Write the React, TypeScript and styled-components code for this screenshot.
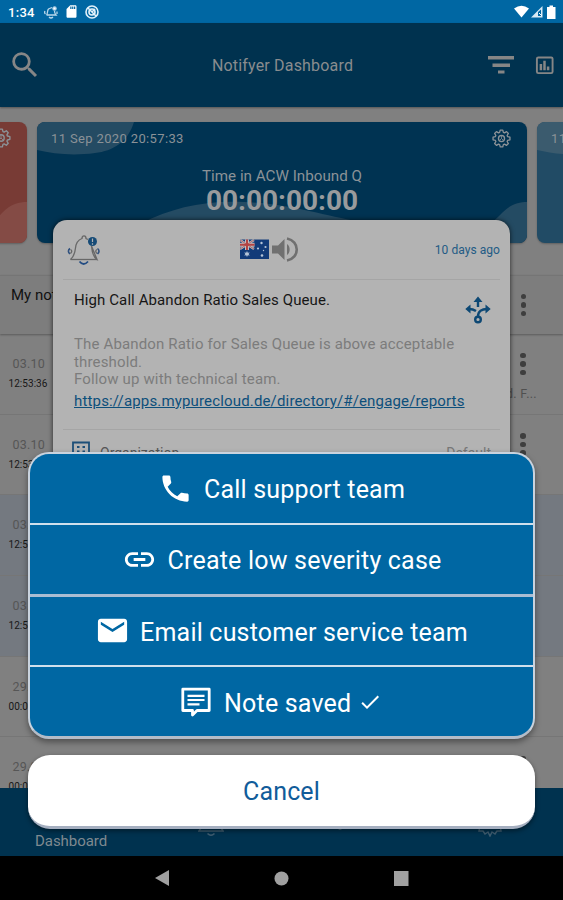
import React from "react";
import styled, { createGlobalStyle } from "styled-components";
import { MdSearch, MdPhone, MdLink, MdEmail, MdCheck, MdVolumeUp, MdSdCard } from "react-icons/md";

const GlobalStyle = createGlobalStyle`
  * { box-sizing: border-box; }
  body { margin: 0; background: #000; font-family: Roboto, "Liberation Sans", sans-serif; }
  svg { display: block; flex: none; }
`;

const Screen = styled.div`
  position: relative;
  display: flex;
  flex-direction: column;
  width: 563px;
  height: 900px;
  overflow: hidden;
  background: #808080;
`;

const StatusBar = styled.div`
  display: flex;
  align-items: center;
  justify-content: space-between;
  height: 23px;
  padding: 0 6px 0 8px;
  background: #0067a3;
  color: #fff;
`;

const StatusGroup = styled.div<{ $gap: number }>`
  display: flex;
  align-items: center;
  gap: ${(p) => p.$gap}px;
`;

const Clock = styled.span`
  width: 28px;
  margin: 2px 2px 0 0;
  font-size: 13px;
  font-weight: 500;
  letter-spacing: 0.3px;
  white-space: nowrap;
`;

const Header = styled.header`
  display: grid;
  grid-template-columns: 90px 1fr 90px;
  align-items: center;
  height: 84px;
  padding: 0 9px 0 8px;
  background: #00324f;
  color: #868686;
  box-shadow: 0 1px 2px rgba(0, 0, 0, 0.35);
  z-index: 1;
`;

const Title = styled.h1`
  margin: 1px 0 0 3px;
  font-size: 16px;
  font-weight: 400;
  letter-spacing: 0.18px;
  text-align: center;
  color: #898c8e;
`;

const HeaderActions = styled.div`
  display: flex;
  align-items: center;
  justify-content: flex-end;
  gap: 20px;
`;

const Carousel = styled.section`
  height: 168px;
  padding-top: 15px;
  overflow: hidden;
  background: #808080;
`;

const Track = styled.div`
  display: flex;
  gap: 10px;
  width: 1490px;
  margin-left: -463px;
`;

const Card = styled.article<{ $bg: string }>`
  position: relative;
  flex: none;
  width: 490px;
  height: 121px;
  overflow: hidden;
  border-radius: 8px;
  background: ${(p) => p.$bg};
  color: #8b9297;
  box-shadow: 0 1px 2px rgba(0, 0, 0, 0.25);
`;

const Waves = styled.svg`
  position: absolute;
  inset: 0;
`;

const CardTop = styled.div`
  position: relative;
  display: flex;
  align-items: center;
  justify-content: space-between;
  height: 32px;
  padding: 0 16px 0 14px;
  font-size: 13px;
  letter-spacing: 0.36px;
`;

const CardBody = styled.div`
  position: relative;
  padding-top: 13px;
  text-align: center;
`;

const CardLabel = styled.div`
  font-size: 15.2px;
  line-height: 18px;
`;

const CardTime = styled.div`
  font-size: 28px;
  font-weight: 700;
  line-height: 31px;
  color: #999b9d;
`;

const ListHeader = styled.div`
  display: flex;
  align-items: center;
  justify-content: space-between;
  height: 59px;
  padding: 0 36.5px 0 11px;
  border-top: 1px solid #757575;
  background: #7d7d7d;
  box-shadow: 0 1px 2px rgba(0, 0, 0, 0.3);
  font-size: 15px;
  color: #111;
  z-index: 1;
`;

const ListTitle = styled.span`
  margin-top: -20px;
`;

const List = styled.div`
  height: 454px;
  overflow: hidden;
`;

const Row = styled.div<{ $tinted?: boolean }>`
  display: flex;
  justify-content: space-between;
  height: 80.7px;
  padding: 21px 18px 0 8.5px;
  border-bottom: 1px solid #767676;
  background: ${(p) => (p.$tinted ? "#747980" : "#808080")};
`;

const Stamp = styled.div`
  display: flex;
  flex-direction: column;
  width: 50px;
  height: 60px;
`;

const DateText = styled.span`
  padding-left: 4px;
  font-size: 12.5px;
  line-height: 18px;
  color: #565656;
  letter-spacing: 0.2px;
`;

const TimeText = styled.span`
  font-size: 10px;
  line-height: 22px;
  letter-spacing: 0.05px;
  color: #171717;
`;

const RowSide = styled.div`
  display: flex;
  flex-direction: column;
  width: 25px;
  margin-top: -2.5px;
`;

const Excerpt = styled.span`
  margin: 11px 0 0 -14px;
  font-size: 12.5px;
  line-height: 15px;
  letter-spacing: 0.3px;
  color: #505050;
  white-space: nowrap;
`;

const Kebab = styled.div`
  display: flex;
  flex-direction: column;
  gap: 3px;
  width: 6px;
`;

const Dot = styled.i`
  width: 5.5px;
  height: 5.5px;
  border-radius: 50%;
  background: #3e3e3e;
`;

const BottomNav = styled.nav`
  display: grid;
  grid-template-columns: 163px 129px 151px 1fr;
  height: 68px;
  padding: 35px 0 0 35px;
  background: #00324f;
  color: #7f898f;
`;

const NavItem = styled.div`
  font-size: 15px;
  line-height: 36px;
  letter-spacing: -0.05px;
`;

const NavIcon = styled.div`
  width: 26px;
  height: 15px;
  color: #3f5d70;
  overflow: hidden;
`;

const SystemNav = styled.div`
  display: flex;
  align-items: center;
  justify-content: space-between;
  height: 44px;
  padding: 0 154px 0 155px;
  background: #000;
  color: #a0a0a0;
`;

const Popup = styled.section`
  position: absolute;
  left: 53px;
  top: 220px;
  width: 457px;
  height: 300px;
  padding: 0 10px;
  border-radius: 14px 14px 0 0;
  background: #b3b3b3;
  box-shadow: 0 0 5px rgba(0, 0, 0, 0.7);
  z-index: 2;
`;

const PopupTop = styled.div`
  display: flex;
  align-items: center;
  height: 60px;
  padding-left: 3px;
  border-bottom: 1px solid #a5a5a5;
`;

const Center = styled.div`
  display: flex;
  align-items: center;
  gap: 2px;
  margin-left: 139px;
`;

const Age = styled.span`
  margin-left: auto;
  font-size: 12px;
  letter-spacing: 0.05px;
  color: #235b85;
`;

const Message = styled.div`
  position: relative;
  height: 150px;
  padding: 10px 10px 0 11px;
  border-bottom: 1px solid #a5a5a5;
`;

const MessageTitle = styled.h2`
  margin: 0 0 26px;
  font-size: 15px;
  font-weight: 400;
  line-height: 20px;
  letter-spacing: 0.1px;
  color: #161616;
`;

const MessageText = styled.p`
  margin: 0;
  font-size: 15px;
  line-height: 17.6px;
  letter-spacing: 0.15px;
  color: #7c7c7c;
`;

const MessageLink = styled.a`
  display: block;
  margin-top: 2px;
  font-size: 15px;
  line-height: 20px;
  letter-spacing: 0.16px;
  color: #0d4f7b;
  text-decoration: underline;
  white-space: nowrap;
`;

const RouteIcon = styled.svg`
  position: absolute;
  right: 9px;
  top: 16px;
`;

const Detail = styled.div`
  display: flex;
  gap: 10px;
  padding: 11px 9px 0 9px;
  font-size: 14px;
  line-height: 20px;
  color: #777;
`;

const DetailName = styled.span`
  flex: 1;
  margin-top: 2px;
  color: #555;
`;

const DetailValue = styled.span`
  margin-top: 2px;
`;

const ActionSheet = styled.div`
  position: absolute;
  left: 28px;
  top: 452px;
  width: 507px;
  display: flex;
  flex-direction: column;
  gap: 16px;
  z-index: 3;
`;

const Actions = styled.div`
  display: flex;
  flex-direction: column;
  height: 287px;
  overflow: hidden;
  border: 2px solid #c9d3de;
  border-bottom: 3px solid #b3bcc8;
  border-radius: 21px;
  background: #0067a3;
  box-shadow: 0 3px 6px rgba(0, 0, 0, 0.4);
`;

const Action = styled.button<{ $line: number; $gap?: number }>`
  display: flex;
  align-items: center;
  justify-content: center;
  gap: ${(p) => p.$gap ?? 12}px;
  flex: 1;
  padding: 0;
  border: 0;
  border-bottom: ${(p) => p.$line}px solid ${(p) => (p.$line > 2 ? "#a9bdd3" : "#cfdfec")};
  background: transparent;
  color: #fff;
  font: 400 25px/30px Roboto, "Liberation Sans", sans-serif;
  letter-spacing: 0.2px;
  white-space: nowrap;
`;

const ActionLabel = styled.span`
  padding-top: 4px;
`;

const Cancel = styled.button`
  height: 74px;
  padding: 3px 0 0;
  border: 0;
  border-bottom: 3px solid #a5afc0;
  border-radius: 22px;
  background: #fff;
  color: #115c9a;
  font: 400 25px/30px Roboto, "Liberation Sans", sans-serif;
  letter-spacing: 0.15px;
  box-shadow: 0 2px 5px rgba(0, 0, 0, 0.45);
`;

const gearPath = () => {
  const pts: string[] = [];
  for (let i = 0; i < 8; i++) {
    const a = (i * Math.PI) / 4;
    [[-0.3, 6.7], [-0.15, 9], [0.15, 9], [0.3, 6.7]].forEach(([d, r]) =>
      pts.push(`${(10 + r * Math.sin(a + d)).toFixed(2)} ${(10 - r * Math.cos(a + d)).toFixed(2)}`)
    );
  }
  return `M${pts.join("L")}Z`;
};

const Gear = ({ size = 19 }: { size?: number }) => (
  <svg width={size} height={size} viewBox="0 0 20 20" fill="none" stroke="currentColor" strokeWidth="1.4" strokeLinejoin="round">
    <path d={gearPath()} />
    <circle cx="10" cy="10" r="3.2" />
    <path d="M10 6.8v3.2l2 2M8 12l2-2" strokeWidth=".8" />
  </svg>
);

const CardWaves = ({ tone }: { tone: string }) => (
  <Waves width="490" height="121" viewBox="0 0 490 121" fill={tone}>
    <path d="M0 0H97C91 20 76 29 58 31C36 34 17 32 0 28Z" />
    <path d="M105 101C134 86 168 78 207 80C251 82 277 91 318 99L350 121H80Z" />
    <path d="M420 121C441 112 456 101 466 90C474 82 482 80 490 80V121Z" />
  </Waves>
);

const Dots = () => (
  <Kebab><Dot /><Dot /><Dot /></Kebab>
);

const AlertBell = () => (
  <svg width="35" height="34" viewBox="0 0 35 34" fill="none" stroke="#686868" strokeWidth="1.3">
    <path d="M4.500 26.500C8 23.500 9 20 9.500 15C10 9.500 12 7 16 5.500C16 2 20 2 20 5.500L22 6.500M25.500 13C26 19 27 24 31 26.500Z" />
    <path d="M4.500 26.500H31" />
    <path d="M13.500 28.500Q17.500 33.500 22 28.500" stroke="#234c82" strokeWidth="1.8" />
    <path d="M4 15.500Q.8 18 4 21M31.500 15.500Q34.500 18 31.500 21" stroke="#30517e" strokeWidth="1.6" />
    <path d="M4.500 16.500Q7 18 4.500 20.500M31 16.500Q28.500 18 31 20.500" />
    <circle cx="26.500" cy="8.500" r="4.500" fill="#164b77" stroke="none" />
    <path d="M26.500 5.500v3.500M26.500 10.300v1.400" stroke="#b3b3b3" strokeWidth="1.2" />
  </svg>
);

const Flag = () => (
  <svg width="29" height="21" viewBox="0 0 29 21">
    <path d="M0 .5H29V20H0Z" fill="#123b79" />
    <path d="M0 1L14 10M14 1L0 10" stroke="#bcbcbd" strokeWidth="2.3" />
    <path d="M7 .5V11M0 5.700H14.500" stroke="#c1bdbf" strokeWidth="4" />
    <path d="M0 1L14 10M14 1L0 10" stroke="#a6444c" strokeWidth=".7" />
    <path d="M7 .5V11M0 5.700H14.500" stroke="#b44343" strokeWidth="2" />
    <g fill="#b6c5d8">
      <path d="M7 12l.8 1.800 2-.4-1.200 1.600 1.200 1.600-2-.4-.8 1.800-.8-1.800-2 .4 1.200-1.600-1.200-1.600 2 .4Z" />
      <circle cx="21.500" cy="4" r="1.200" /><circle cx="18" cy="9.500" r="1.100" />
      <circle cx="25.500" cy="8" r="1.100" /><circle cx="22" cy="16.500" r="1.300" /><circle cx="23.500" cy="11.500" r=".7" />
    </g>
  </svg>
);

const Speaker = () => (
  <svg width="29" height="27" viewBox="0 0 29 27" fill="#707070">
    <path d="M1 9.500H7L13.500 3V24L7 17.500H1Z" />
    <path d="M16 8C19.500 10 19.500 17 16 19Z" />
    <path d="M16 2.500C29 5 29 22 16 24.500" fill="none" stroke="#707070" strokeWidth="2.600" />
  </svg>
);

const Note = () => (
  <svg width="30" height="30" viewBox="0 0 30 30" fill="none" stroke="#fff" strokeWidth="2.8" strokeLinejoin="round">
    <path d="M1.800 2.200H28.200V23.500H16L11.500 28V23.500H1.800Z" />
    <path d="M6.500 8.800H23.500M6.500 13H23.500M6.500 17.300H18.500" strokeWidth="2.2" />
  </svg>
);

const rows = [
  { date: "03.10", time: "12:53:36", excerpt: "d. F..." },
  { date: "03.10", time: "12:53:36" },
  { date: "03.10", time: "12:53:36", tinted: true },
  { date: "03.10", time: "12:54:36", tinted: true },
  { date: "29.09", time: "00:00:00" },
  { date: "29.09", time: "00:00:00" },
];

export default function App() {
  return (
    <Screen>
      <GlobalStyle />
      <StatusBar>
        <StatusGroup $gap={6}>
          <Clock>1:34</Clock>
          <svg width="14" height="14" viewBox="0 0 14 14" fill="none" stroke="#b9d7ea" strokeWidth="1.300">
            <path d="M2.500 10C4 8.500 3 5.500 4.500 4L8 2.500M10.500 6C10.500 8 11 9 12 10H2.500M5 12Q7 14 9 12M1 6Q0 8 1.500 9M13 6.500V9" />
            <circle cx="10.500" cy="3.500" r="1.600" fill="#fff" />
          </svg>
          <MdSdCard size={15} />
          <svg width="14" height="14" viewBox="0 0 14 14" fill="none" stroke="#e2f1fa" strokeWidth="1.600">
            <circle cx="7" cy="7" r="6" /><circle cx="7" cy="7" r="3" /><path d="M3 3L11 11M7 7L10 4" />
          </svg>
        </StatusGroup>
        <StatusGroup $gap={1}>
          <svg width="15" height="13" viewBox="0 0 15 13" fill="#fff"><path d="M0 3.500Q7.500-2 15 3.500L7.500 12.500Z" /></svg>
          <svg width="14" height="13" viewBox="0 0 14 13"><path d="M1 12.500L12.500 1V12.500Z" fill="#d7eaf5" /><path d="M8 11V7L11 4.500V11Z" fill="#0067a3" /><path d="M9 8L12 11" stroke="#fff" /></svg>
          <svg width="12" height="14" viewBox="0 0 12 14" fill="#fff"><path d="M2 2H4.500V.5H8V2H10.500V14H2Z" /></svg>
        </StatusGroup>
      </StatusBar>
      <Header>
        <MdSearch size={34} />
        <Title>Notifyer Dashboard</Title>
        <HeaderActions>
          <svg width="27" height="18" viewBox="0 0 27 18" fill="currentColor"><path d="M0 0H26V3.500H0ZM4.500 7.500H22V11H4.500ZM10 14.500H16.500V17.500H10Z" /></svg>
          <svg width="19" height="19" viewBox="0 0 20 19" fill="none" stroke="currentColor" strokeWidth="2">
            <rect x="2" y="1" width="16.500" height="16.500" rx="1.500" />
            <path d="M6.200 8v6.500M10 4.500v10M13.800 10.500v4" strokeWidth="2.600" />
          </svg>
        </HeaderActions>
      </Header>
      <Carousel>
        <Track>
          <Card $bg="#783b35">
            <CardWaves tone="#844b45" />
            <CardTop><span>11 Sep 2020 20:57:33</span><Gear size={20} /></CardTop>
          </Card>
          <Card $bg="#003352">
            <CardWaves tone="#244b63" />
            <CardTop><span>11 Sep 2020 20:57:33</span><Gear /></CardTop>
            <CardBody>
              <CardLabel>Time in ACW Inbound Q</CardLabel>
              <CardTime>00:00:00:00</CardTime>
            </CardBody>
          </Card>
          <Card $bg="#214b65">
            <CardWaves tone="#3b5b6e" />
            <CardTop><span>11 Sep 2020 20:57:33</span></CardTop>
          </Card>
        </Track>
      </Carousel>
      <ListHeader><ListTitle>My notifications</ListTitle><Dots /></ListHeader>
      <List>
        {rows.map((r, i) => (
          <Row key={i} $tinted={r.tinted}>
            <Stamp><DateText>{r.date}</DateText><TimeText>{r.time}</TimeText></Stamp>
            <RowSide><Dots />{r.excerpt && <Excerpt>{r.excerpt}</Excerpt>}</RowSide>
          </Row>
        ))}
      </List>
      <BottomNav>
        <NavItem>Dashboard</NavItem>
        <NavIcon><svg width="26" height="14" viewBox="0 0 26 14" fill="none" stroke="currentColor" strokeWidth="1.600"><path d="M4 3L1 8H25L22 3M9.500 10.500Q13 14 16.500 10.500" /></svg></NavIcon>
        <NavIcon><svg width="26" height="14" viewBox="0 0 26 14" fill="currentColor"><circle cx="13" cy="5" r="2" /></svg></NavIcon>
        <NavIcon><svg width="24" height="14" viewBox="0 0 24 14" fill="none" stroke="currentColor" strokeWidth="1.500"><path d="M2 2L1 8H5L7 11L10 9L12 13L14 9L17 11L19 8H23L22 2" /></svg></NavIcon>
      </BottomNav>
      <SystemNav>
        <svg width="14" height="16" viewBox="0 0 14 16" fill="currentColor"><path d="M14 0V16L0 8Z" /></svg>
        <svg width="15" height="15" viewBox="0 0 15 15" fill="currentColor"><circle cx="7.500" cy="7.500" r="7" /></svg>
        <svg width="15" height="15" viewBox="0 0 15 15" fill="currentColor"><path d="M0 0H14.500V15H0Z" /></svg>
      </SystemNav>

      <Popup>
        <PopupTop>
          <AlertBell />
          <Center>
            <Flag />
            <Speaker />
          </Center>
          <Age>10 days ago</Age>
        </PopupTop>
        <Message>
          <MessageTitle>High Call Abandon Ratio Sales Queue.</MessageTitle>
          <RouteIcon width="26" height="28" viewBox="0 0 26 28" fill="none" stroke="#0d4874" strokeWidth="2.400">
            <circle cx="13" cy="23.500" r="2.800" />
            <path d="M13 20.500C13 15 17 13 22 13M13 11V4M4 13Q8 13 11 15" />
            <path d="M8.500 6L13 .5L17.500 6ZM5.500 8.500L.3 13L5.500 17.500ZM20.500 8.500L25.700 13L20.500 17.500Z" fill="#0d4874" stroke="none" />
          </RouteIcon>
          <MessageText>
            The Abandon Ratio for Sales Queue is above acceptable threshold.
            <br />
            Follow up with technical team.
          </MessageText>
          <MessageLink>https://apps.mypurecloud.de/directory/#/engage/reports</MessageLink>
        </Message>
        <Detail>
          <svg width="18" height="22" viewBox="0 0 18 22" fill="none" stroke="#1d4f78" strokeWidth="1.800">
            <path d="M1 21V1.500H17V21M5 6H7.500M10.500 6H13M5 10.500H7.500M10.500 10.500H13" />
          </svg>
          <DetailName>Organization</DetailName>
          <DetailValue>Default</DetailValue>
        </Detail>
      </Popup>

      <ActionSheet>
        <Actions>
          <Action $line={2} $gap={11}><MdPhone size={35} /><ActionLabel>Call support team</ActionLabel></Action>
          <Action $line={3} $gap={11}><MdLink size={35} /><ActionLabel>Create low severity case</ActionLabel></Action>
          <Action $line={2} $gap={10}><MdEmail size={35} /><ActionLabel>Email customer service team</ActionLabel></Action>
          <Action $line={0} $gap={7}><Note /><ActionLabel>&nbsp;Note saved</ActionLabel><MdCheck size={24} /></Action>
        </Actions>
        <Cancel>Cancel</Cancel>
      </ActionSheet>
    </Screen>
  );
}
